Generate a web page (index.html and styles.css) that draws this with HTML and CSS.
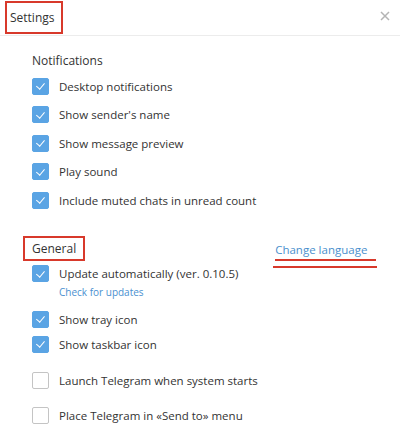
FILE: index.html
```html
<!DOCTYPE html>
<html lang="en">
<head>
  <meta charset="UTF-8">
  <meta name="viewport" content="width=device-width, initial-scale=1.0">
  <title>Settings</title>
  <link rel="stylesheet" href="styles.css">
</head>
<body>

<header>
  <span class="title marked">Settings</span>
  <svg class="close" width="10" height="10" viewBox="0 0 10 10">
    <path d="M1 1 L9 9 M9 1 L1 9" stroke="#b4b4b4" stroke-width="1.5" fill="none"/>
  </svg>
</header>

<div class="container">
  <div class="section notifications">
    <div class="section-title">Notifications</div>
    <div class="row"><span class="check on"></span>Desktop notifications</div>
    <div class="row"><span class="check on"></span>Show sender's name</div>
    <div class="row"><span class="check on"></span>Show message preview</div>
    <div class="row"><span class="check on"></span>Play sound</div>
    <div class="row"><span class="check on"></span>Include muted chats in unread count</div>
  </div>

  <div class="section general">
    <div class="general-head">
      <span class="section-title marked">General</span>
      <a class="lang-link">Change language</a>
    </div>
    <div class="row update"><span class="check on"></span>Update automatically (ver. 0.10.5)</div>
    <div class="check-updates">Check for updates</div>

    <div class="group tray">
      <div class="row short"><span class="check on"></span>Show tray icon</div>
      <div class="row short"><span class="check on"></span>Show taskbar icon</div>
    </div>

    <div class="group startup">
      <div class="row tall"><span class="check"></span>Launch Telegram when system starts</div>
      <div class="row tall"><span class="check"></span>Place Telegram in «Send to» menu</div>
    </div>
  </div>
</div>

</body>
</html>
```

FILE: styles.css
```css
body {
  font-family: "Open Sans", Arial, sans-serif;
  background-color: #fff;
  color: #333;
  margin: 0;
  padding: 0;
  font-size: 11.5px;
}

header {
  height: 36px;
  border-bottom: 1px solid #ececec;
  display: flex;
  align-items: flex-start;
  justify-content: space-between;
  padding: 1px 10px 0 5px;
  box-sizing: border-box;
}

.marked {
  border: 2px solid #d8392b;
}

.title {
  font-size: 12px;
  height: 33px;
  line-height: 29px;
  padding: 0 6px 0 3px;
  box-sizing: border-box;
}

.close {
  margin-top: 10px;
}

.container {
  padding: 0 0 0 32px;
}

.section-title {
  font-size: 12px;
  height: 22px;
  line-height: 22px;
}

.notifications {
  padding-top: 14px;
}

.row {
  height: 28.5px;
  display: flex;
  align-items: center;
}

.check {
  width: 17px;
  height: 17px;
  border-radius: 2px;
  box-sizing: border-box;
  border: 1.5px solid #c4c4c4;
  margin-right: 10px;
  flex-shrink: 0;
  position: relative;
}

.check.on {
  background-color: #5aa4e4;
  border-color: #5aa4e4;
}

.check.on::after {
  content: "";
  position: absolute;
  left: 4.5px;
  top: 2.5px;
  width: 3.5px;
  height: 7px;
  border-right: 1.8px solid #fff;
  border-bottom: 1.8px solid #fff;
  transform: rotate(40deg);
}

.general {
  margin-top: 21.5px;
}

.general-head {
  display: flex;
  align-items: flex-start;
  height: 25px;
  margin-left: -9px;
}

.general-head .section-title {
  height: 25px;
  line-height: 21px;
  padding: 0 7px;
  box-sizing: border-box;
}

.lang-link {
  font-size: 11.5px;
  color: #4a8fcd;
  margin-left: 190px;
  margin-top: 6px;
  padding: 0 9px 1px 0;
  line-height: 16px;
  border-bottom: 2px solid #d8392b;
  position: relative;
}

.lang-link::after {
  content: "";
  position: absolute;
  left: -2px;
  right: -1px;
  bottom: -9px;
  border-bottom: 2px solid #d8392b;
}

.row.update {
  height: 23px;
  margin-top: 1px;
}

.check-updates {
  font-size: 10px;
  color: #4a90d0;
  line-height: 14px;
  padding-left: 27px;
}

.tray {
  margin-top: 7.5px;
}

.row.short {
  height: 25px;
}

.startup {
  margin-top: 6px;
}

.row.tall {
  height: 35px;
}
```
